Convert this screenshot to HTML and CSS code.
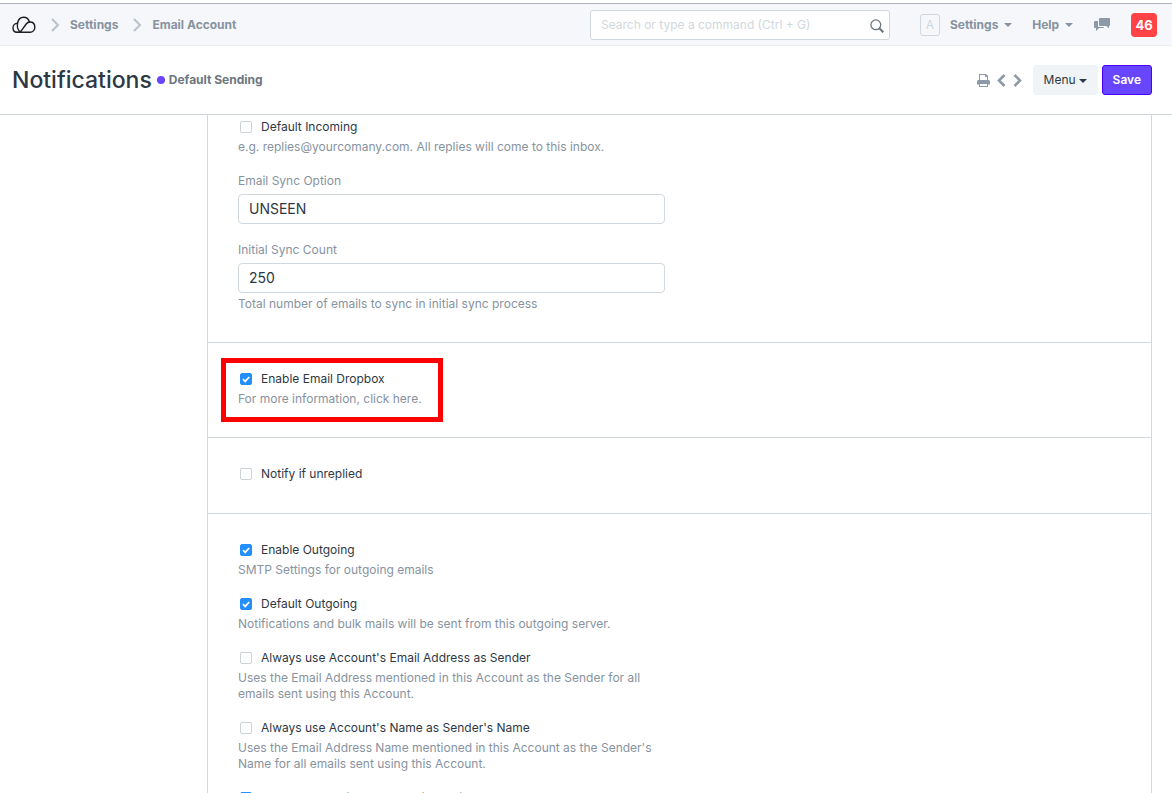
FILE: index.html
```html
<!DOCTYPE html>
<html lang="en">
<head>
  <meta charset="UTF-8" />
  <meta name="viewport" content="width=device-width, initial-scale=1" />
  <title>Notifications</title>
  <link rel="stylesheet" href="styles.css">
</head>
<body>
  <header class="navbar">
    <nav class="breadcrumbs" aria-label="Breadcrumb">
      <a href="#" class="brand" aria-label="Home">
        <svg width="24" height="18" viewBox="0 0 24 18" fill="none" stroke="#1c1f22" stroke-width="1.4" stroke-linecap="round" stroke-linejoin="round">
          <path d="M5 16.200H18.500a4.600 4.600 0 0 0 4.300-5C22.800 8 20.700 6 18 6c-1.700 0-2.800.6-3.800 2L9.400 14.600c-.8 1.200-2 1.600-3.400 1.600" />
          <path d="M7.600 15.500C5.600 13.200 5 10 5.600 7 6.300 3.500 8.500 1.200 11.600 1.200c2.800 0 5 1.700 5.800 4.800" />
          <path d="M5.400 7.300A4.500 4.500 0 0 0 1 11.700c0 2.500 1.600 4.500 4 4.500" />
        </svg>
      </a>
      <svg class="crumb-sep" width="9" height="14" viewBox="0 0 9 14" fill="none" stroke="#b8c2cc" stroke-width="2"><path d="M1 1l6 6-6 6" /></svg>
      <a href="#">Settings</a>
      <svg class="crumb-sep" width="9" height="14" viewBox="0 0 9 14" fill="none" stroke="#b8c2cc" stroke-width="2"><path d="M1 1l6 6-6 6" /></svg>
      <a href="#">Email Account</a>
    </nav>
    <div class="nav-right">
      <form class="search" role="search">
        <input type="text" aria-label="Search" placeholder="Search or type a command (Ctrl + G)" />
        <svg width="14" height="14" viewBox="0 0 14 14" fill="none" stroke="#6c7680" stroke-width="1.300"><circle cx="5.800" cy="5.800" r="4.900" /><path d="M9.300 9.300l4 4" stroke-width="2" /></svg>
      </form>
      <span class="avatar">A</span>
      <a href="#" class="nav-link">Settings <span class="caret"></span></a>
      <a href="#" class="nav-link">Help <span class="caret"></span></a>
      <a href="#" class="chat" aria-label="Chat">
        <svg width="16" height="14" viewBox="0 0 16 14" fill="#8d99a6">
          <path d="M6 0h9a1 1 0 0 1 1 1v6a1 1 0 0 1-1 1v2.500L12.500 8H6a1 1 0 0 1-1-1V1a1 1 0 0 1 1-1z" />
          <path d="M4 3H1a1 1 0 0 0-1 1v5a1 1 0 0 0 1 1h1v3l3-3h4a1 1 0 0 0 1-1H5a1 1 0 0 1-1-1z" />
        </svg>
      </a>
      <a href="#" class="badge">46</a>
    </div>
  </header>

  <div class="page-head">
    <h1>Notifications</h1>
    <span class="indicator">Default Sending</span>
    <div class="actions">
      <button type="button" class="icon-btn" aria-label="Print">
        <svg width="13" height="13" viewBox="0 0 13 13" fill="#8d99a6">
          <path fill-rule="evenodd" d="M2 0h7l2 2v4.500H2zM3 1v5.500h7V3H8V1z" />
          <path d="M1.500 6h10A1.500 1.500 0 0 1 13 7.500V10.500H0V7.500A1.500 1.500 0 0 1 1.500 6z" />
          <path d="M2 9h9v4H2z" />
          <path d="M3 10h7v2H3z" fill="#fff" />
        </svg>
      </button>
      <button type="button" class="icon-btn" aria-label="Previous">
        <svg width="9" height="13" viewBox="0 0 9 13" fill="none" stroke="#8d99a6" stroke-width="2.600"><path d="M7.500 1L2 6.500 7.500 12" /></svg>
      </button>
      <button type="button" class="icon-btn" aria-label="Next">
        <svg width="9" height="13" viewBox="0 0 9 13" fill="none" stroke="#8d99a6" stroke-width="2.600"><path d="M1.500 1L7 6.500 1.500 12" /></svg>
      </button>
      <button type="button" class="btn btn-menu">Menu<span class="caret"></span></button>
      <button type="button" class="btn btn-primary">Save</button>
    </div>
  </div>

  <main class="page-body">
    <form class="form-layout">
      <section class="section section-first">
        <div class="field">
          <label class="check"><input type="checkbox" /> Default Incoming</label>
          <p class="help">e.g. replies@yourcomany.com. All replies will come to this inbox.</p>
        </div>
        <div class="field">
          <label class="field-label" for="sync-option">Email Sync Option</label>
          <select id="sync-option" class="control">
            <option>UNSEEN</option>
            <option>ALL</option>
          </select>
        </div>
        <div class="field">
          <label class="field-label" for="sync-count">Initial Sync Count</label>
          <select id="sync-count" class="control">
            <option>250</option>
            <option>500</option>
          </select>
          <p class="help">Total number of emails to sync in initial sync process</p>
        </div>
      </section>

      <section class="section">
        <div class="field highlight">
          <label class="check"><input type="checkbox" checked /> Enable Email Dropbox</label>
          <p class="help">For more information, <a href="#">click here</a>.</p>
        </div>
      </section>

      <section class="section">
        <div class="field">
          <label class="check"><input type="checkbox" /> Notify if unreplied</label>
        </div>
      </section>

      <section class="section">
        <div class="field">
          <label class="check"><input type="checkbox" checked /> Enable Outgoing</label>
          <p class="help">SMTP Settings for outgoing emails</p>
        </div>
        <div class="field">
          <label class="check"><input type="checkbox" checked /> Default Outgoing</label>
          <p class="help">Notifications and bulk mails will be sent from this outgoing server.</p>
        </div>
        <div class="field">
          <label class="check"><input type="checkbox" /> Always use Account's Email Address as Sender</label>
          <p class="help">Uses the Email Address mentioned in this Account as the Sender for all emails sent using this Account.</p>
        </div>
        <div class="field">
          <label class="check"><input type="checkbox" /> Always use Account's Name as Sender's Name</label>
          <p class="help">Uses the Email Address Name mentioned in this Account as the Sender's Name for all emails sent using this Account.</p>
        </div>
        <div class="field">
          <label class="check"><input type="checkbox" checked /> Send unsubscribe message in email</label>
        </div>
      </section>
    </form>
  </main>
</body>
</html>
```
FILE: styles.css
```css
:root {
  --text: #2e3845;
  --muted: #8793a0;
  --border: #d1d8dd;
  --primary: #6846ff;
  --blue: #2490ff;
}

* {
  box-sizing: border-box;
}

body {
  margin: 0;
  height: 100vh;
  display: flex;
  flex-direction: column;
  overflow: hidden;
  padding-top: 3px;
  font-family: Inter, "Liberation Sans", sans-serif;
  font-size: 12px;
  line-height: 18px;
  color: var(--text);
  background: #fff;
}

a {
  color: inherit;
  text-decoration: none;
}

input,
select,
button {
  font-family: inherit;
  color: inherit;
}

.navbar {
  display: flex;
  flex-shrink: 0;
  align-items: center;
  justify-content: space-between;
  height: 43px;
  padding: 0 15px 0 12px;
  background: #f5f7fa;
  border-top: 1px solid #b1b1ba;
  border-bottom: 1px solid #ebeef1;
  color: var(--muted);
  font-weight: 700;
}

.breadcrumbs,
.nav-right,
.actions {
  display: flex;
  align-items: center;
}

.brand,
.chat {
  display: flex;
}

.crumb-sep {
  margin: 0 10px 0 15px;
}

.search {
  position: relative;
  width: 300px;
  margin-right: 30px;
}

.search input {
  display: block;
  width: 100%;
  height: 30px;
  padding: 0 36px 0 10px;
  border: 1px solid var(--border);
  border-radius: 3px;
  background: #fff;
  font-size: 12px;
}

.search input::placeholder {
  color: var(--border);
}

.search svg {
  position: absolute;
  top: 9px;
  right: 6px;
}

.avatar {
  width: 20px;
  height: 22px;
  border: 1px solid var(--border);
  border-radius: 3px;
  color: var(--border);
  font-weight: 400;
  line-height: 20px;
  text-align: center;
}

.nav-link {
  margin-left: 10px;
}

.nav-link + .nav-link {
  margin-left: 20px;
}

.caret {
  display: inline-block;
  margin-left: 3px;
  border-top: 4px solid;
  border-left: 4px solid transparent;
  border-right: 4px solid transparent;
  vertical-align: middle;
}

.chat {
  margin: 0 21px;
}

.badge {
  width: 26px;
  border-radius: 4px;
  background: #ff4245;
  color: #fff;
  font-size: 13px;
  line-height: 24px;
  text-align: center;
}

.page-head {
  display: flex;
  flex-shrink: 0;
  align-items: center;
  height: 69px;
  padding: 0 20px 0 12px;
  border-bottom: 1px solid var(--border);
}

h1 {
  margin: 0;
  font-size: 23px;
  font-weight: 500;
}

.indicator {
  display: flex;
  align-items: center;
  margin-left: 5px;
  color: #6c7680;
  font-weight: 700;
}

.indicator::before {
  content: "";
  width: 8px;
  height: 8px;
  margin-right: 4px;
  border-radius: 50%;
  background: var(--primary);
}

.actions {
  margin-left: auto;
}

.icon-btn {
  display: flex;
  margin-right: 7px;
  padding: 0;
  border: 0;
  background: none;
}

.btn {
  height: 30px;
  padding: 0 10px 1px;
  border: 1px solid #f0f4f7;
  border-radius: 3px;
  background: #f0f4f7;
  font-size: 12px;
}

.btn-menu {
  margin: 0 4px;
}

.btn-primary {
  border-color: #4b00ff;
  background: var(--primary);
  color: #fff;
  font-weight: 600;
}

.page-body {
  flex: 1;
  min-height: 0;
  overflow: hidden;
  padding: 0 20px 0 207px;
}

.form-layout {
  border: 1px solid var(--border);
  border-top: 0;
}

.section {
  display: flex;
  flex-direction: column;
  align-items: flex-start;
  gap: 17px;
  padding: 27px 30px 30px;
}

.section + .section {
  border-top: 1px solid var(--border);
}

.section-first {
  padding-top: 3px;
}

.field {
  width: 427px;
}

.check {
  display: flex;
  align-items: center;
  gap: 9px;
}

.check input {
  appearance: none;
  width: 12px;
  height: 12px;
  margin: 0 0 0 2px;
  border: 1px solid #cbd3d9;
  border-radius: 2px;
  background: #fff;
}

.check input:checked {
  border-color: var(--blue);
  background: var(--blue) url("data:image/svg+xml,%3Csvg xmlns='http://www.w3.org/2000/svg' viewBox='0 0 10 10' fill='none' stroke='white' stroke-width='1.700'%3E%3Cpath d='M2 5.200l2.200 2.200L8.200 3'/%3E%3C/svg%3E") center / 10px no-repeat;
}

.help {
  margin: 3px 0 0;
  color: var(--muted);
  line-height: 16px;
}

.field-label {
  display: block;
  margin-bottom: 4px;
  color: var(--muted);
}

.control {
  display: block;
  appearance: none;
  width: 100%;
  height: 30px;
  padding: 0 10px 1px;
  border: 1px solid var(--border);
  border-radius: 4px;
  background: #fff;
  font-size: 14px;
}

/* red callout frame drawn around the field */
.highlight {
  width: auto;
  margin: -12px -17px -15px;
  padding: 7px 16px 10px 12px;
  border: 5px solid #ff0000;
}
```
